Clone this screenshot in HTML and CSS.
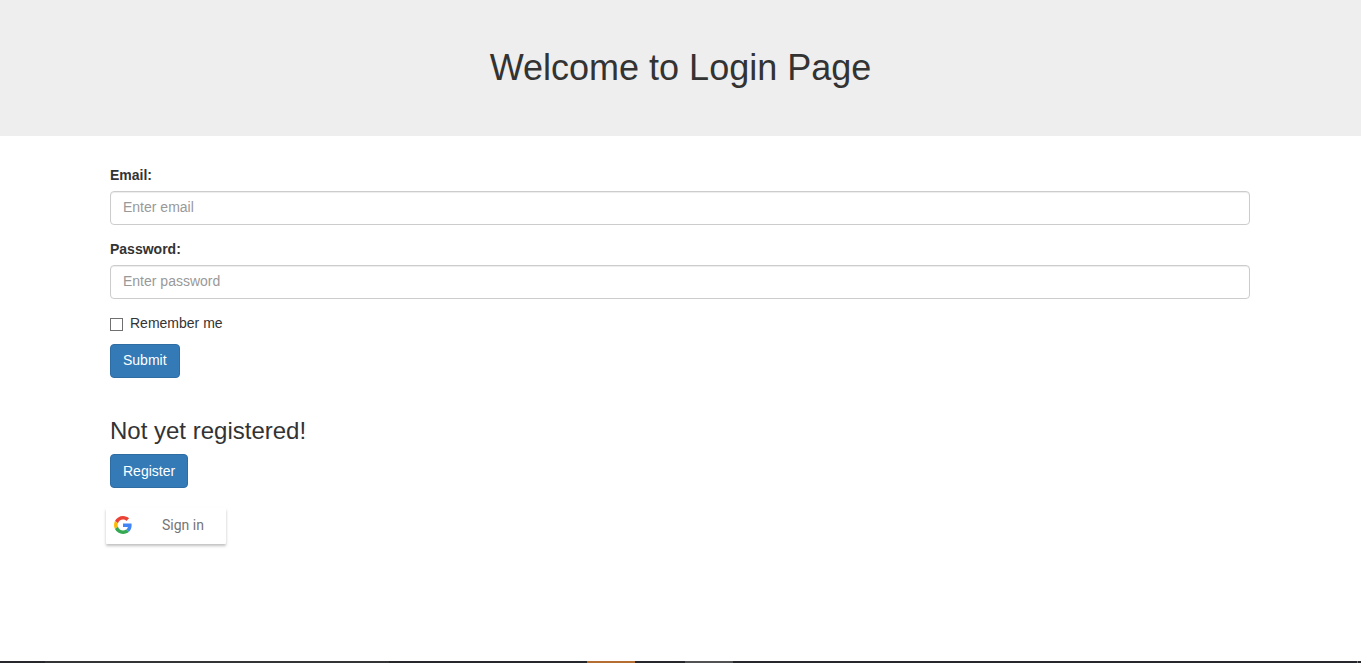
FILE: index.html
```html
<!DOCTYPE html>
<html lang="en">
<head>
<meta charset="utf-8">
<title>Login Page</title>
<link rel="stylesheet" href="styles.css">
</head>
<body>
<header class="jumbotron">
  <h1 class="title">Welcome to Login Page</h1>
</header>
<main class="container">
  <form>
    <div class="form-group">
      <label class="form-label" for="email">Email:</label>
      <input class="form-control" type="email" id="email" placeholder="Enter email">
    </div>
    <div class="form-group">
      <label class="form-label" for="pwd">Password:</label>
      <input class="form-control" type="password" id="pwd" placeholder="Enter password">
    </div>
    <div class="checkbox">
      <input class="check" type="checkbox" id="remember">
      <label for="remember">Remember me</label>
    </div>
    <button class="btn" type="submit">Submit</button>
  </form>
  <section class="register">
    <h3 class="subtitle">Not yet registered!</h3>
    <button class="btn btn-register" type="button">Register</button>
  </section>
  <button class="google" type="button">
    <svg class="google-icon" viewBox="0 0 48 48" aria-hidden="true">
      <path fill="#EA4335" d="M24 9.5c3.54 0 6.71 1.22 9.21 3.6l6.85-6.85C35.9 2.38 30.47 0 24 0 14.62 0 6.51 5.38 2.56 13.22l7.98 6.19C12.43 13.72 17.74 9.5 24 9.5z"/>
      <path fill="#4285F4" d="M46.98 24.55c0-1.57-.15-3.09-.38-4.55H24v9.02h12.94c-.58 2.96-2.26 5.48-4.78 7.18l7.73 6c4.51-4.18 7.09-10.36 7.09-17.65z"/>
      <path fill="#FBBC05" d="M10.53 28.59c-.48-1.45-.76-2.99-.76-4.59s.27-3.14.76-4.59l-7.98-6.19C.92 16.46 0 20.12 0 24c0 3.88.92 7.54 2.56 10.78l7.97-6.19z"/>
      <path fill="#34A853" d="M24 48c6.48 0 11.93-2.13 15.89-5.81l-7.73-6c-2.15 1.45-4.92 2.3-8.16 2.3-6.26 0-11.57-4.22-13.47-9.91l-7.98 6.19C6.51 42.62 14.62 48 24 48z"/>
    </svg>
    <span class="google-text">Sign in</span>
  </button>
</main>
<footer class="taskbar">
  <span class="search"></span>
  <span class="app app-orange"></span>
  <span class="app app-gray"></span>
  <span class="edge"></span>
</footer>
</body>
</html>
```
FILE: styles.css
```css
* {
  box-sizing: border-box;
}

body {
  display: flex;
  flex-direction: column;
  min-height: 100vh;
  margin: 0;
  background: #fff;
  color: #333;
  font: 14px/20px "Liberation Sans", Arial, sans-serif;
}

.jumbotron {
  margin-bottom: 29px;
  padding: 48px 0;
  background: #eee;
  text-align: center;
}

.title {
  margin: 0;
  font-size: 36px;
  font-weight: 400;
  line-height: 40px;
}

.container {
  flex: 1;
  width: 100%;
  max-width: 1171px;
  margin: 0 auto;
  padding: 0 16px 0 15px;
}

.form-group {
  margin-bottom: 14px;
}

.form-label {
  display: block;
  margin-bottom: 6px;
  font-weight: 700;
}

.form-control {
  display: block;
  width: 100%;
  height: 34px;
  padding: 5px 12px 7px;
  border: 1px solid #ccc;
  border-radius: 4px;
  background: #fff;
  box-shadow: inset 0 1px 1px rgba(0, 0, 0, 0.075);
  color: #555;
  font: inherit;
}

.form-control::placeholder {
  color: #999;
  opacity: 1;
}

.checkbox {
  display: flex;
  align-items: center;
  gap: 7px;
  margin-bottom: 11px;
}

.check {
  appearance: none;
  width: 13px;
  height: 13px;
  margin: 2px 0 0;
  border: 1px solid #707070;
  background: #fff;
}

.check:checked {
  background: #337ab7;
}

.btn {
  display: block;
  height: 34px;
  padding: 5px 12px 7px;
  border: 1px solid #2e6da4;
  border-radius: 4px;
  background: #337ab7;
  color: #fff;
  font: inherit;
}

.btn-register {
  padding: 6px 12px;
}

.register {
  margin: 40px 0 20px;
}

.subtitle {
  margin: 0 0 10px;
  font-size: 24px;
  font-weight: 400;
  line-height: 26px;
}

.google {
  display: flex;
  align-items: center;
  width: 120px;
  height: 36px;
  margin-left: -4px;
  padding: 0 8px 2px;
  border: 0;
  border-radius: 1px;
  background: #fff;
  box-shadow: 0 2px 3px 0 rgba(0, 0, 0, 0.25);
  color: #757575;
  font: 400 14px/20px Roboto, Arial, sans-serif;
}

.google-icon {
  width: 18px;
  height: 18px;
}

.google-text {
  flex: 1;
  padding-left: 16px;
}

.taskbar {
  display: flex;
  height: 2px;
  background: #25272a;
}

.search {
  width: 344px;
  margin-left: 45px;
  background: #333436;
}

.app {
  width: 48px;
}

.app-orange {
  margin-left: 198px;
  background: #b56d31;
}

.app-gray {
  margin-left: 50px;
  background: #505254;
}

.edge {
  width: 1px;
  margin: 0 3px 0 auto;
  background: #77797b;
}
```
